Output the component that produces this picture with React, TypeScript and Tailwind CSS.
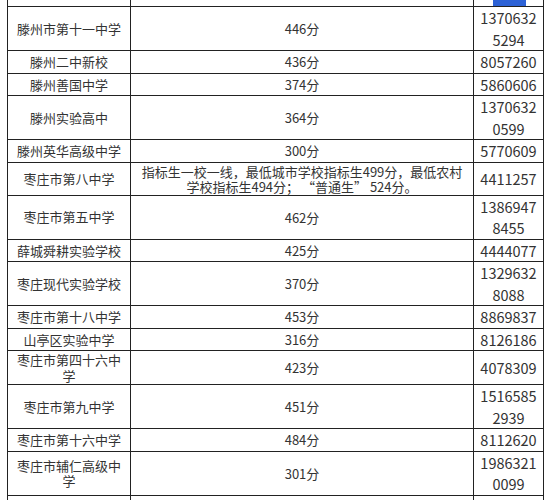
const rows: { name: string; score: string; phone: string }[] = [
  { name: "滕州市第十一中学", score: "446分", phone: "13706325294" },
  { name: "滕州二中新校", score: "436分", phone: "8057260" },
  { name: "滕州善国中学", score: "374分", phone: "5860606" },
  { name: "滕州实验高中", score: "364分", phone: "13706320599" },
  { name: "滕州英华高级中学", score: "300分", phone: "5770609" },
  {
    name: "枣庄市第八中学",
    score: "指标生一校一线，最低城市学校指标生499分，最低农村学校指标生494分； “普通生” 524分。",
    phone: "4411257",
  },
  { name: "枣庄市第五中学", score: "462分", phone: "13869478455" },
  { name: "薛城舜耕实验学校", score: "425分", phone: "4444077" },
  { name: "枣庄现代实验学校", score: "370分", phone: "13296328088" },
  { name: "枣庄市第十八中学", score: "453分", phone: "8869837" },
  { name: "山亭区实验中学", score: "316分", phone: "8126186" },
  { name: "枣庄市第四十六中学", score: "423分", phone: "4078309" },
  { name: "枣庄市第九中学", score: "451分", phone: "15165852939" },
  { name: "枣庄市第十六中学", score: "484分", phone: "8112620" },
  { name: "枣庄市辅仁高级中学", score: "301分", phone: "19863210099" },
]

export default function App() {
  return (
    <div
      lang="zh-CN"
      className="min-h-[500px] bg-white pl-[7px] text-[#333]"
      style={{ fontFamily: '"Noto Sans CJK SC", "Microsoft YaHei", sans-serif' }}
    >
      <table className="table-fixed border-collapse w-[536px]">
        <colgroup>
          <col className="w-[123px]" />
          <col className="w-[343px]" />
          <col className="w-[70px]" />
        </colgroup>
        <tbody>
          <tr>
            <td className="h-[6px] border-x border-b border-[#222] p-0"></td>
            <td className="h-[6px] border-x border-b border-[#222] p-0"></td>
            <td className="h-[6px] border-x border-b border-[#222] p-0 align-top">
              <div className="ml-[19px] h-[6px] w-[33px] bg-[#2d62d6]" />
            </td>
          </tr>
          {rows.map((r, i) => (
            <tr key={i}>
              <td className="border border-[#222] px-[4px] py-[1px] text-center align-middle text-[13px] leading-[15.5px]">
                {r.name}
              </td>
              <td className="border border-[#222] px-[5px] py-[1px] text-center align-middle text-[13px] leading-[15px]">
                {r.score}
              </td>
              <td className="border border-[#222] px-[4px] py-0 text-center align-middle text-[14.5px] leading-[21.5px] break-all">
                {r.phone}
              </td>
            </tr>
          ))}
          <tr>
            <td className="h-[22px] border border-[#222]"></td>
            <td className="h-[22px] border border-[#222]"></td>
            <td className="h-[22px] border border-[#222]"></td>
          </tr>
        </tbody>
      </table>
    </div>
  )
}
